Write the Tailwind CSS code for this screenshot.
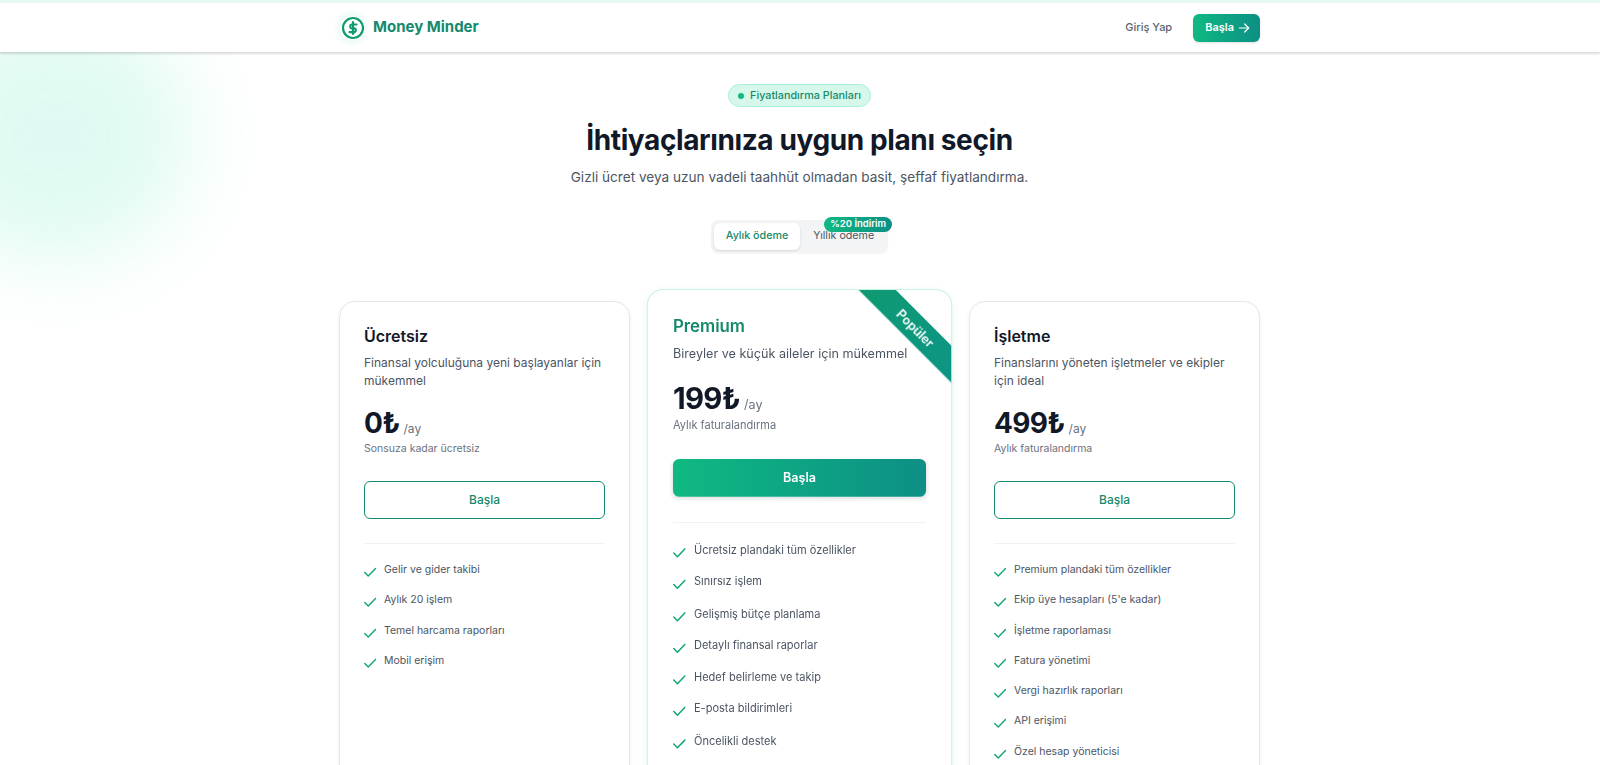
<!DOCTYPE html>
<html lang="tr">
<head>
  <meta charset="UTF-8">
  <meta name="viewport" content="width=device-width, initial-scale=1.0">
  <title>Money Minder - Fiyatlandırma</title>
  <script src="https://cdn.jsdelivr.net/npm/@tailwindcss/browser@4"></script>
</head>
<body class="bg-white font-['Inter',sans-serif] text-[#111827] h-[765px] overflow-hidden">
  <div class="relative h-[765px] overflow-hidden">
    <!-- background blob -->
    <div class="absolute -left-[80px] top-[10px] w-[270px] h-[250px] rounded-full bg-[#d5f9ee] opacity-75 blur-[40px]"></div>

    <div class="relative h-[3px] bg-[#e6f8f3]"></div>

    <!-- header -->
    <header class="relative bg-white h-[49px] shadow-[0_2px_2px_rgba(0,0,0,0.14)]">
      <div class="w-[920px] mx-auto h-full flex items-center justify-between">
        <div class="flex items-center gap-[9px]">
          <div class="w-6 h-6 rounded-full shadow-[0_0_10px_rgba(16,185,129,0.18)] text-[#0f9a6f]">
            <svg xmlns="http://www.w3.org/2000/svg" width="24" height="24" viewBox="0 0 24 24" fill="none" stroke="currentColor" stroke-width="2.2" stroke-linecap="round" stroke-linejoin="round">
              <circle cx="13" cy="12" r="10"/>
              <path d="M16.5 8.5h-5a2 2 0 0 0 0 3.8h3a2 2 0 0 1 0 3.8H9.5"/>
              <path d="M13 18v-12"/>
            </svg>
          </div>
          <span class="text-[15px] font-bold text-[#15896b]">Money Minder</span>
        </div>
        <div class="flex items-center gap-[21px]">
          <a class="text-[11px] font-medium text-[#5b6472]">Giriş Yap</a>
          <a class="flex items-center gap-[2px] h-[28px] pl-[12px] pr-[8px] rounded-md bg-gradient-to-r from-[#10b981] to-[#0d8f85] text-white text-[11px] font-semibold shadow-sm">
            Başla
            <svg xmlns="http://www.w3.org/2000/svg" width="16" height="16" viewBox="0 0 24 24" fill="none" stroke="currentColor" stroke-width="1.8" stroke-linecap="round" stroke-linejoin="round">
              <path d="M5 12h14"/><path d="m13 6 6 6-6 6"/>
            </svg>
          </a>
        </div>
      </div>
    </header>

    <main class="relative w-[921px] ml-[339px] pt-[32px]">
      <div class="flex flex-col items-center">
        <div class="flex items-center gap-[6px] h-[23px] px-[9px] pt-[1px] rounded-full bg-[#d5f8ea] border border-[#a7f0d3] text-[10.8px] font-medium text-[#15896b]">
          <span class="w-[6px] h-[6px] rounded-full bg-[#10b981]"></span>
          Fiyatlandırma Planları
        </div>
        <h1 class="mt-[15px] text-[28px] tracking-[-0.014em] leading-[36px] font-bold">İhtiyaçlarınıza uygun planı seçin</h1>
        <p class="mt-[9px] text-[13.6px] leading-5 text-[#4b5563]">Gizli ücret veya uzun vadeli taahhüt olmadan basit, şeffaf fiyatlandırma.</p>

        <div class="relative mt-[33px] flex items-center gap-[2px] h-[33px] px-[3px] rounded-lg bg-[#f3f4f6] shadow-[0_1px_2px_rgba(0,0,0,0.04)]">
          <button class="h-[27px] px-[12px] rounded-md bg-white text-[10.7px] font-medium text-[#15896b] shadow-sm">Aylık ödeme</button>
          <button class="h-[27px] px-[11px] text-[10.7px] font-normal text-[#4b5563]">Yıllık ödeme</button>
          <span class="absolute -top-[3px] -right-[4px] h-[15px] px-[6px] flex items-center rounded-full bg-gradient-to-r from-[#10b981] to-[#0d8f85] text-white text-[9.5px] font-semibold">%20 İndirim</span>
        </div>
      </div>

      <div class="mt-[48px] grid grid-cols-3 gap-6 items-stretch">
        <!-- Ücretsiz -->
        <div class="rounded-2xl border border-[#e5e7eb] bg-white p-6 shadow-[0_1px_4px_rgba(0,0,0,0.05)]">
          <h3 class="text-base font-semibold leading-[20px]">Ücretsiz</h3>
          <p class="mt-[8px] text-xs leading-[18px] text-[#4b5563]">Finansal yolculuğuna yeni başlayanlar için mükemmel</p>
          <div class="mt-[16px] flex items-baseline gap-[4px]">
            <span class="text-[28px] tracking-tight leading-[34px] font-bold">0₺</span>
            <span class="text-xs text-[#6b7280]">/ay</span>
          </div>
          <p class="mt-[1px] text-[10.5px] leading-[16px] text-[#6b7280]">Sonsuza kadar ücretsiz</p>
          <button class="mt-[24px] w-full h-[38px] rounded-md border border-[#15896b] text-xs font-medium text-[#15896b]">Başla</button>
          <div class="mt-[24px] border-t border-[#f1f2f4]"></div>
          <ul class="mt-[18px] space-y-[14.3px] text-[10.5px] leading-[16px] text-[#4b5563]">
            <li class="flex gap-[8px]"><svg class="mt-[4px] shrink-0" xmlns="http://www.w3.org/2000/svg" width="12" height="12" viewBox="0 0 24 24" fill="none" stroke="#10a47a" stroke-width="2.8" stroke-linecap="round" stroke-linejoin="round"><path d="M1.5 13l7 7L23 5"/></svg>Gelir ve gider takibi</li>
            <li class="flex gap-[8px]"><svg class="mt-[4px] shrink-0" xmlns="http://www.w3.org/2000/svg" width="12" height="12" viewBox="0 0 24 24" fill="none" stroke="#10a47a" stroke-width="2.8" stroke-linecap="round" stroke-linejoin="round"><path d="M1.5 13l7 7L23 5"/></svg>Aylık 20 işlem</li>
            <li class="flex gap-[8px]"><svg class="mt-[4px] shrink-0" xmlns="http://www.w3.org/2000/svg" width="12" height="12" viewBox="0 0 24 24" fill="none" stroke="#10a47a" stroke-width="2.8" stroke-linecap="round" stroke-linejoin="round"><path d="M1.5 13l7 7L23 5"/></svg>Temel harcama raporları</li>
            <li class="flex gap-[8px]"><svg class="mt-[4px] shrink-0" xmlns="http://www.w3.org/2000/svg" width="12" height="12" viewBox="0 0 24 24" fill="none" stroke="#10a47a" stroke-width="2.8" stroke-linecap="round" stroke-linejoin="round"><path d="M1.5 13l7 7L23 5"/></svg>Mobil erişim</li>
          </ul>
        </div>

        <!-- Premium -->
        <div class="relative scale-105 overflow-hidden rounded-2xl border border-[#c5f2e1] bg-white p-6 shadow-[0_2px_8px_rgba(16,185,129,0.08)]">
          <div class="absolute top-[24px] -right-[46px] w-[160px] h-[25px] rotate-45 flex items-center justify-center bg-gradient-to-r from-[#0f9a6f] to-[#0d9488] text-white text-[12px] font-semibold">Popüler</div>
          <h3 class="text-base font-semibold leading-[20px] text-[#15896b]">Premium</h3>
          <p class="mt-[8px] text-xs leading-[18px] text-[#4b5563]">Bireyler ve küçük aileler için mükemmel</p>
          <div class="mt-[16px] flex items-baseline gap-[4px]">
            <span class="text-[28px] tracking-tight leading-[34px] font-bold">199₺</span>
            <span class="text-xs text-[#6b7280]">/ay</span>
          </div>
          <p class="mt-[1px] text-[10.5px] leading-[16px] text-[#6b7280]">Aylık faturalandırma</p>
          <button class="mt-[24px] w-full h-[36px] rounded-md bg-gradient-to-r from-[#10b981] to-[#0d8f85] text-xs font-semibold text-white shadow-[0_2px_4px_rgba(0,0,0,0.12)]">Başla</button>
          <div class="mt-[24px] border-t border-[#f1f2f4]"></div>
          <ul class="mt-[18px] space-y-[14.3px] text-[10.5px] leading-[16px] text-[#4b5563]">
            <li class="flex gap-[8px]"><svg class="mt-[4px] shrink-0" xmlns="http://www.w3.org/2000/svg" width="12" height="12" viewBox="0 0 24 24" fill="none" stroke="#10a47a" stroke-width="2.8" stroke-linecap="round" stroke-linejoin="round"><path d="M1.5 13l7 7L23 5"/></svg>Ücretsiz plandaki tüm özellikler</li>
            <li class="flex gap-[8px]"><svg class="mt-[4px] shrink-0" xmlns="http://www.w3.org/2000/svg" width="12" height="12" viewBox="0 0 24 24" fill="none" stroke="#10a47a" stroke-width="2.8" stroke-linecap="round" stroke-linejoin="round"><path d="M1.5 13l7 7L23 5"/></svg>Sınırsız işlem</li>
            <li class="flex gap-[8px]"><svg class="mt-[4px] shrink-0" xmlns="http://www.w3.org/2000/svg" width="12" height="12" viewBox="0 0 24 24" fill="none" stroke="#10a47a" stroke-width="2.8" stroke-linecap="round" stroke-linejoin="round"><path d="M1.5 13l7 7L23 5"/></svg>Gelişmiş bütçe planlama</li>
            <li class="flex gap-[8px]"><svg class="mt-[4px] shrink-0" xmlns="http://www.w3.org/2000/svg" width="12" height="12" viewBox="0 0 24 24" fill="none" stroke="#10a47a" stroke-width="2.8" stroke-linecap="round" stroke-linejoin="round"><path d="M1.5 13l7 7L23 5"/></svg>Detaylı finansal raporlar</li>
            <li class="flex gap-[8px]"><svg class="mt-[4px] shrink-0" xmlns="http://www.w3.org/2000/svg" width="12" height="12" viewBox="0 0 24 24" fill="none" stroke="#10a47a" stroke-width="2.8" stroke-linecap="round" stroke-linejoin="round"><path d="M1.5 13l7 7L23 5"/></svg>Hedef belirleme ve takip</li>
            <li class="flex gap-[8px]"><svg class="mt-[4px] shrink-0" xmlns="http://www.w3.org/2000/svg" width="12" height="12" viewBox="0 0 24 24" fill="none" stroke="#10a47a" stroke-width="2.8" stroke-linecap="round" stroke-linejoin="round"><path d="M1.5 13l7 7L23 5"/></svg>E-posta bildirimleri</li>
            <li class="flex gap-[8px]"><svg class="mt-[4px] shrink-0" xmlns="http://www.w3.org/2000/svg" width="12" height="12" viewBox="0 0 24 24" fill="none" stroke="#10a47a" stroke-width="2.8" stroke-linecap="round" stroke-linejoin="round"><path d="M1.5 13l7 7L23 5"/></svg>Öncelikli destek</li>
          </ul>
        </div>

        <!-- İşletme -->
        <div class="rounded-2xl border border-[#e5e7eb] bg-white p-6 shadow-[0_1px_4px_rgba(0,0,0,0.05)]">
          <h3 class="text-base font-semibold leading-[20px]">İşletme</h3>
          <p class="mt-[8px] text-xs leading-[18px] text-[#4b5563]">Finanslarını yöneten işletmeler ve ekipler için ideal</p>
          <div class="mt-[16px] flex items-baseline gap-[4px]">
            <span class="text-[28px] tracking-tight leading-[34px] font-bold">499₺</span>
            <span class="text-xs text-[#6b7280]">/ay</span>
          </div>
          <p class="mt-[1px] text-[10.5px] leading-[16px] text-[#6b7280]">Aylık faturalandırma</p>
          <button class="mt-[24px] w-full h-[38px] rounded-md border border-[#15896b] text-xs font-medium text-[#15896b]">Başla</button>
          <div class="mt-[24px] border-t border-[#f1f2f4]"></div>
          <ul class="mt-[18px] space-y-[14.3px] text-[10.5px] leading-[16px] text-[#4b5563]">
            <li class="flex gap-[8px]"><svg class="mt-[4px] shrink-0" xmlns="http://www.w3.org/2000/svg" width="12" height="12" viewBox="0 0 24 24" fill="none" stroke="#10a47a" stroke-width="2.8" stroke-linecap="round" stroke-linejoin="round"><path d="M1.5 13l7 7L23 5"/></svg>Premium plandaki tüm özellikler</li>
            <li class="flex gap-[8px]"><svg class="mt-[4px] shrink-0" xmlns="http://www.w3.org/2000/svg" width="12" height="12" viewBox="0 0 24 24" fill="none" stroke="#10a47a" stroke-width="2.8" stroke-linecap="round" stroke-linejoin="round"><path d="M1.5 13l7 7L23 5"/></svg>Ekip üye hesapları (5'e kadar)</li>
            <li class="flex gap-[8px]"><svg class="mt-[4px] shrink-0" xmlns="http://www.w3.org/2000/svg" width="12" height="12" viewBox="0 0 24 24" fill="none" stroke="#10a47a" stroke-width="2.8" stroke-linecap="round" stroke-linejoin="round"><path d="M1.5 13l7 7L23 5"/></svg>İşletme raporlaması</li>
            <li class="flex gap-[8px]"><svg class="mt-[4px] shrink-0" xmlns="http://www.w3.org/2000/svg" width="12" height="12" viewBox="0 0 24 24" fill="none" stroke="#10a47a" stroke-width="2.8" stroke-linecap="round" stroke-linejoin="round"><path d="M1.5 13l7 7L23 5"/></svg>Fatura yönetimi</li>
            <li class="flex gap-[8px]"><svg class="mt-[4px] shrink-0" xmlns="http://www.w3.org/2000/svg" width="12" height="12" viewBox="0 0 24 24" fill="none" stroke="#10a47a" stroke-width="2.8" stroke-linecap="round" stroke-linejoin="round"><path d="M1.5 13l7 7L23 5"/></svg>Vergi hazırlık raporları</li>
            <li class="flex gap-[8px]"><svg class="mt-[4px] shrink-0" xmlns="http://www.w3.org/2000/svg" width="12" height="12" viewBox="0 0 24 24" fill="none" stroke="#10a47a" stroke-width="2.8" stroke-linecap="round" stroke-linejoin="round"><path d="M1.5 13l7 7L23 5"/></svg>API erişimi</li>
            <li class="flex gap-[8px]"><svg class="mt-[4px] shrink-0" xmlns="http://www.w3.org/2000/svg" width="12" height="12" viewBox="0 0 24 24" fill="none" stroke="#10a47a" stroke-width="2.8" stroke-linecap="round" stroke-linejoin="round"><path d="M1.5 13l7 7L23 5"/></svg>Özel hesap yöneticisi</li>
          </ul>
        </div>
      </div>
    </main>
  </div>
</body>
</html>
